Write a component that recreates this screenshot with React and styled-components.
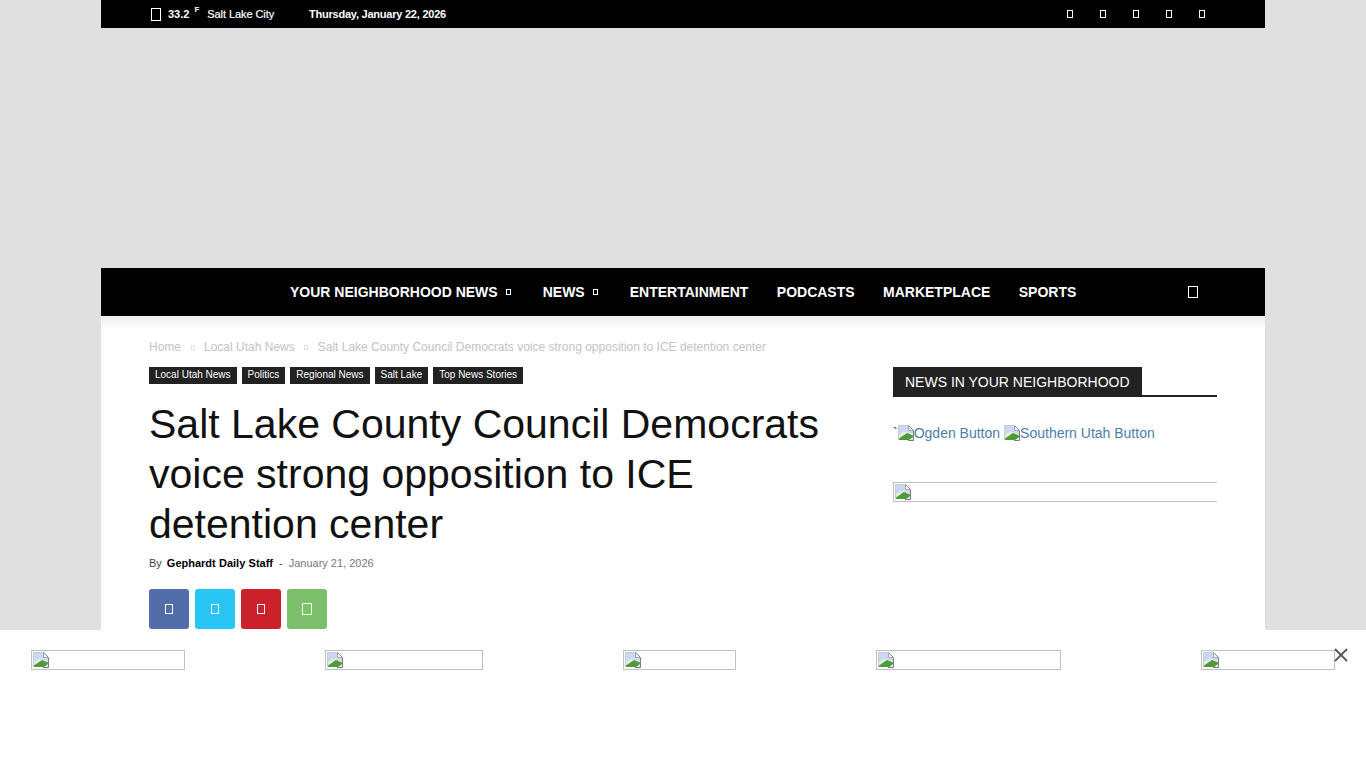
import React from 'react';
import styled, { createGlobalStyle } from 'styled-components';
import { X } from 'lucide-react';

const GlobalStyle = createGlobalStyle`
  html, body {
    margin: 0;
    padding: 0;
    overflow: hidden;
    background: #e0e0e0;
  }
  * {
    box-sizing: border-box;
  }
  body {
    font-family: "Liberation Sans", Arial, sans-serif;
  }
`;

const Page = styled.div`
  width: 1164px;
  height: 768px;
  margin-left: 101px;
  overflow: hidden;
`;

const TopBar = styled.div`
  display: flex;
  align-items: center;
  height: 28px;
  padding: 0 60px 0 50px;
  background: #000;
  color: #fff;
  font-size: 11px;
  font-weight: 700;
`;

const Tofu = styled.span`
  display: inline-block;
  flex: none;
  width: ${(p) => p.$w}px;
  height: ${(p) => p.$h}px;
  border: 1px solid ${(p) => p.$color || '#fff'};
`;

const Temp = styled.span`
  margin-left: 7px;
`;

const Unit = styled.sup`
  margin: -8px 0 0 5px;
  font-size: 8px;
  line-height: 8px;
  align-self: flex-start;
  padding-top: 14px;
`;

const City = styled.span`
  margin-left: 8px;
  font-weight: 400;
  letter-spacing: -0.08px;
  -webkit-text-stroke: 0.2px #fff;
`;

const DateText = styled.span`
  margin-left: 35px;
  letter-spacing: -0.23px;
`;

const Socials = styled.div`
  display: flex;
  gap: 27px;
  margin-left: auto;
`;

const AdSpace = styled.div`
  height: 240px;
`;

const NavBar = styled.nav`
  display: flex;
  align-items: center;
  height: 48px;
  padding: 0 67px 0 189px;
  background: #000;
`;

const NavItem = styled.a`
  display: flex;
  align-items: center;
  margin-right: ${(p) => (p.$caret ? 32 : 28.4)}px;
  color: #fff;
  font-size: 14px;
  font-weight: 700;
  line-height: 48px;
`;

const Caret = styled(Tofu)`
  margin-left: 8px;
`;

const SearchButton = styled.span`
  display: flex;
  margin-left: auto;
`;

const Main = styled.div`
  display: flex;
  gap: 48px;
  height: 452px;
  padding: 0 48px;
  background: linear-gradient(#eeeeee 0, #fff 14px);
`;

const Article = styled.article`
  width: 696px;
`;

const Breadcrumbs = styled.div`
  display: flex;
  align-items: center;
  height: 14px;
  margin-top: 24px;
  color: #c3c3c3;
  font-size: 12px;
`;

const CrumbSep = styled(Tofu)`
  margin: 0 9.5px;
`;

const Tags = styled.div`
  display: flex;
  gap: 5px;
  margin-top: 13px;
`;

const Tag = styled.a`
  height: 17px;
  padding: 0 6px;
  background: #222;
  color: #fff;
  font-size: 10px;
  line-height: 16px;
`;

const Title = styled.h1`
  margin: 15px 0 0;
  color: #111;
  font-size: 41px;
  font-weight: 400;
  line-height: 50px;
`;

const Meta = styled.div`
  display: flex;
  align-items: center;
  height: 14px;
  margin-top: 7px;
  color: #444;
  font-size: 11px;
`;

const Author = styled.span`
  margin-left: 5px;
  color: #000;
  font-weight: 700;
  word-spacing: 0.2px;
`;

const Dash = styled.span`
  margin: 0 6px;
`;

const PostDate = styled.span`
  color: #777;
`;

const ShareRow = styled.div`
  display: flex;
  gap: 6px;
  margin-top: 19px;
`;

const ShareButton = styled.a`
  display: flex;
  align-items: center;
  justify-content: center;
  width: 40px;
  height: 40px;
  border-radius: 3px;
  background: ${(p) => p.$bg};
`;

const Sidebar = styled.aside`
  width: 324px;
  padding-top: 51px;
`;

const BlockTitle = styled.div`
  display: flex;
  height: 30px;
  border-bottom: 2px solid #222;
`;

const BlockLabel = styled.span`
  height: 30px;
  padding: 0 12px;
  background: #222;
  color: #fff;
  font-size: 14px;
  line-height: 30px;
`;

const ButtonLinks = styled.div`
  display: flex;
  align-items: center;
  gap: 4px;
  height: 20px;
  margin-top: 26px;
  color: #4a7fa7;
  font-size: 14px;
`;

const Tick = styled.span`
  margin-right: -4px;
  color: #222;
`;

const BrokenLink = styled.a`
  display: inline-flex;
  align-items: center;
`;

const WideSlot = styled.div`
  height: 20px;
  margin-top: 39px;
  padding: 1px;
  border: 1px solid #c0c0c0;
  border-right: 0;
`;

const BottomAd = styled.div`
  position: fixed;
  left: 0;
  right: 0;
  bottom: 0;
  display: flex;
  justify-content: center;
  align-items: flex-start;
  gap: 140px;
  height: 138px;
  padding-top: 20px;
  background: #fff;
`;

const AdSlot = styled.div`
  width: ${(p) => p.$w}px;
  height: 20px;
  padding: 1px;
  border: 1px solid #c0c0c0;
`;

const CloseButton = styled.button`
  position: absolute;
  top: 14px;
  left: 1330px;
  display: flex;
  padding: 0;
  border: 0;
  background: none;
  color: #555;
`;

// chrome's broken image picture
const BrokenIcon = () => (
  <svg width="16" height="16" viewBox="0 0 16 16" style={{ display: 'block', flex: 'none' }}>
    <path d="M0.5 15.5V0.5H10.5" fill="none" stroke="#c8c8d4" />
    <path d="M1 1H10V5H15V15H1Z" fill="#c9d8f4" />
    <path d="M1 15V10L6 6.5L15 9V15Z" fill="#e4f0dc" />
    <path d="M1 15V13.5L9 8L15 10.5V12L11 15Z" fill="#4f9a3c" />
    <path d="M10.5 0.5L15.5 5.5V15.5H10" fill="none" stroke="#7c7c7c" />
    <path d="M10.5 1V5.5H15" fill="#f4f4f4" stroke="#a8a8a8" />
  </svg>
);

const crumbs = ['Home', 'Local Utah News'];
const tags = ['Local Utah News', 'Politics', 'Regional News', 'Salt Lake', 'Top News Stories'];
const shares = [
  { bg: '#516eab', w: 8, h: 10 },
  { bg: '#29c5f6', w: 8, h: 10 },
  { bg: '#ca212a', w: 8, h: 10 },
  { bg: '#7bbf6a', w: 10, h: 12 },
];
const adWidths = [154, 158, 113, 185, 134];

const App = () => (
  <>
    <GlobalStyle />
    <Page>
      <TopBar>
        <Tofu $w={10} $h={13} />
        <Temp>33.2</Temp>
        <Unit>F</Unit>
        <City>Salt Lake City</City>
        <DateText>Thursday, January 22, 2026</DateText>
        <Socials>
          {[0, 1, 2, 3, 4].map((i) => (
            <Tofu key={i} $w={6} $h={8} />
          ))}
        </Socials>
      </TopBar>
      <AdSpace />
      <NavBar>
        <NavItem $caret>
          YOUR NEIGHBORHOOD NEWS
          <Caret $w={5} $h={6} />
        </NavItem>
        <NavItem $caret>
          NEWS
          <Caret $w={5} $h={6} />
        </NavItem>
        <NavItem>ENTERTAINMENT</NavItem>
        <NavItem>PODCASTS</NavItem>
        <NavItem>MARKETPLACE</NavItem>
        <NavItem>SPORTS</NavItem>
        <SearchButton>
          <Tofu $w={10} $h={12} />
        </SearchButton>
      </NavBar>
      <Main>
        <Article>
          <Breadcrumbs>
            {crumbs.map((c) => (
              <React.Fragment key={c}>
                <span>{c}</span>
                <CrumbSep $w={4} $h={5} $color="#e2e2e2" />
              </React.Fragment>
            ))}
            <span>Salt Lake County Council Democrats voice strong opposition to ICE detention center</span>
          </Breadcrumbs>
          <Tags>
            {tags.map((t) => (
              <Tag key={t}>{t}</Tag>
            ))}
          </Tags>
          <Title>Salt Lake County Council Democrats voice strong opposition to ICE detention center</Title>
          <Meta>
            By
            <Author>Gephardt Daily Staff</Author>
            <Dash>-</Dash>
            <PostDate>January 21, 2026</PostDate>
          </Meta>
          <ShareRow>
            {shares.map((s) => (
              <ShareButton key={s.bg} $bg={s.bg}>
                <Tofu $w={s.w} $h={s.h} />
              </ShareButton>
            ))}
          </ShareRow>
        </Article>
        <Sidebar>
          <BlockTitle>
            <BlockLabel>NEWS IN YOUR NEIGHBORHOOD</BlockLabel>
          </BlockTitle>
          <ButtonLinks>
            <Tick>`</Tick>
            <BrokenLink>
              <BrokenIcon />
              Ogden Button
            </BrokenLink>
            <BrokenLink>
              <BrokenIcon />
              Southern Utah Button
            </BrokenLink>
          </ButtonLinks>
          <WideSlot>
            <BrokenIcon />
          </WideSlot>
        </Sidebar>
      </Main>
    </Page>
    <BottomAd>
      {adWidths.map((w) => (
        <AdSlot key={w} $w={w}>
          <BrokenIcon />
        </AdSlot>
      ))}
      <CloseButton aria-label="Close">
        <X size={22} strokeWidth={2} />
      </CloseButton>
    </BottomAd>
  </>
);

export default App;
